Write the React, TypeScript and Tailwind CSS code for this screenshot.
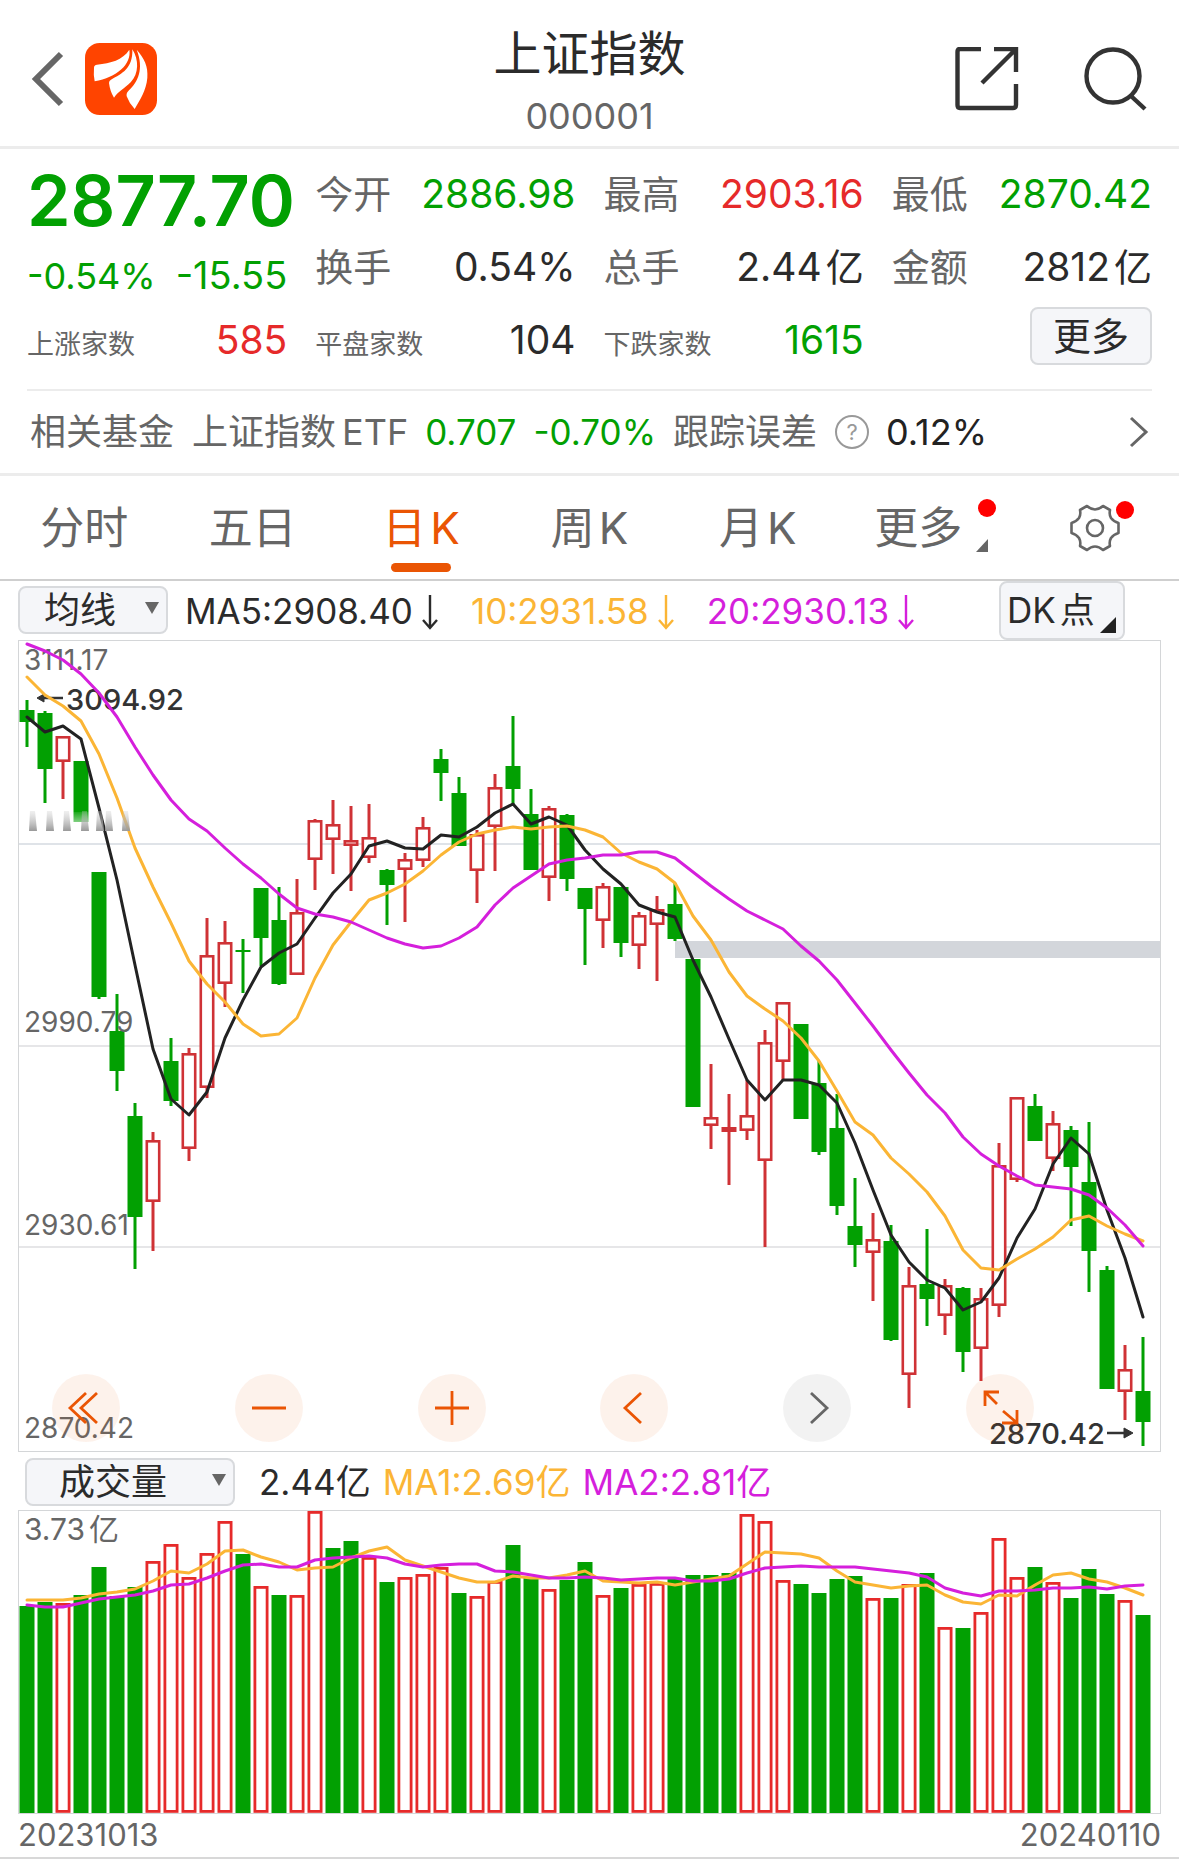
import type { ReactNode } from "react";

const GREEN = "#02a002";
const RED = "#cf3236";
const VOLUME_RED = "#e62a2a";
const BLACK = "#222222";
const AMBER = "#fbb535";
const MAGENTA = "#d51fdc";

const FIRST_X = 27;
const STEP = 18;
const BODY = 15;

type Candle = [kind: "g" | "r", high: number, top: number, bottom: number, low: number];

const candles: Candle[] = [
  ["g", 700, 710, 722, 747], ["g", 711, 713, 769, 803], ["r", 736, 736, 762, 799], ["g", 761, 761, 822, 822],
  ["g", 872, 872, 997, 999], ["g", 994, 1031, 1071, 1091], ["g", 1103, 1116, 1217, 1269], ["r", 1132, 1140, 1202, 1251],
  ["g", 1038, 1061, 1101, 1106], ["r", 1048, 1053, 1149, 1161], ["r", 918, 955, 1088, 1098], ["r", 921, 942, 984, 1007],
  ["g", 939, 950, 952, 993], ["g", 888, 888, 938, 966], ["g", 887, 920, 984, 985], ["r", 879, 912, 975, 975],
  ["r", 819, 820, 860, 890], ["r", 800, 824, 840, 874], ["r", 806, 840, 846, 891], ["r", 804, 837, 858, 863],
  ["g", 869, 870, 885, 925], ["r", 853, 859, 870, 922], ["r", 817, 827, 861, 867], ["g", 749, 759, 773, 801],
  ["g", 777, 793, 846, 846], ["r", 830, 834, 871, 903], ["r", 774, 787, 827, 871], ["g", 716, 766, 789, 805],
  ["g", 789, 814, 870, 870], ["r", 806, 808, 878, 901], ["g", 814, 815, 879, 891], ["g", 888, 888, 909, 965],
  ["r", 883, 886, 921, 948], ["g", 887, 887, 943, 957], ["r", 912, 915, 946, 969], ["r", 896, 909, 925, 981],
  ["g", 883, 904, 939, 941], ["g", 959, 959, 1107, 1107], ["r", 1064, 1117, 1126, 1149], ["r", 1094, 1127, 1132, 1185],
  ["r", 1080, 1115, 1131, 1140], ["r", 1030, 1042, 1161, 1247], ["r", 1002, 1002, 1062, 1080], ["g", 1024, 1024, 1119, 1119],
  ["g", 1061, 1083, 1152, 1155], ["g", 1094, 1128, 1206, 1215], ["g", 1178, 1226, 1245, 1267], ["r", 1213, 1239, 1253, 1301],
  ["g", 1225, 1241, 1340, 1341], ["r", 1267, 1285, 1375, 1408], ["g", 1229, 1284, 1299, 1326], ["r", 1279, 1285, 1316, 1335],
  ["g", 1287, 1288, 1352, 1372], ["r", 1288, 1298, 1349, 1381], ["r", 1143, 1165, 1306, 1317], ["r", 1097, 1097, 1180, 1182],
  ["g", 1094, 1106, 1141, 1141], ["r", 1111, 1123, 1159, 1171], ["g", 1126, 1130, 1167, 1226], ["g", 1122, 1182, 1251, 1292],
  ["g", 1266, 1270, 1389, 1389], ["r", 1345, 1369, 1392, 1420], ["g", 1337, 1391, 1422, 1446],
];

const ma5 = [717, 732, 726, 739, 808, 880, 965, 1049, 1099, 1115, 1092, 1038, 1000, 967, 953, 944, 918, 893, 874, 846, 841, 848, 849, 835, 837, 827, 813, 804, 824, 817, 825, 850, 869, 884, 905, 912, 917, 960, 997, 1039, 1080, 1100, 1080, 1080, 1085, 1103, 1143, 1190, 1235, 1262, 1280, 1288, 1310, 1302, 1278, 1238, 1209, 1164, 1138, 1154, 1210, 1258, 1317];
const ma10 = [677, 695, 706, 721, 754, 798, 848, 887, 923, 961, 984, 1002, 1024, 1036, 1034, 1018, 978, 945, 922, 900, 893, 884, 871, 855, 842, 834, 830, 827, 829, 827, 826, 830, 837, 853, 862, 869, 883, 916, 940, 972, 996, 1009, 1021, 1038, 1061, 1091, 1122, 1135, 1158, 1174, 1192, 1216, 1250, 1268, 1270, 1259, 1249, 1237, 1220, 1216, 1226, 1234, 1241];
const ma20 = [644, 651, 660, 674, 693, 717, 747, 775, 800, 819, 831, 848, 864, 878, 894, 908, 914, 917, 922, 930, 938, 944, 948, 946, 938, 927, 905, 888, 876, 864, 860, 858, 855, 855, 852, 852, 858, 872, 886, 899, 911, 920, 929, 946, 961, 980, 1003, 1026, 1050, 1073, 1095, 1113, 1137, 1154, 1166, 1176, 1185, 1187, 1189, 1195, 1208, 1225, 1246];

const volumeKinds = "ggrggggrrrrrgrgrrggrgrrrgrrggrggrgrrggggrrrggggrgrgrgrrrgrgggrg";
const volumes = [1606, 1602, 1603, 1595, 1567, 1596, 1587, 1561, 1544, 1577, 1553, 1521, 1554, 1586, 1595, 1595, 1511, 1548, 1541, 1557, 1582, 1577, 1574, 1567, 1593, 1596, 1581, 1545, 1578, 1589, 1580, 1562, 1595, 1588, 1584, 1583, 1579, 1575, 1575, 1573, 1514, 1521, 1580, 1584, 1593, 1579, 1576, 1598, 1598, 1584, 1573, 1627, 1628, 1612, 1538, 1577, 1567, 1582, 1598, 1569, 1594, 1600, 1615];
const volMa1 = [1600, 1600, 1600, 1598, 1594, 1592, 1589, 1581, 1571, 1573, 1564, 1551, 1550, 1557, 1562, 1570, 1568, 1567, 1558, 1551, 1547, 1560, 1566, 1572, 1578, 1582, 1582, 1576, 1578, 1578, 1575, 1571, 1581, 1582, 1583, 1582, 1585, 1582, 1579, 1576, 1564, 1552, 1553, 1554, 1558, 1571, 1582, 1585, 1588, 1586, 1585, 1595, 1602, 1604, 1595, 1596, 1585, 1575, 1573, 1579, 1582, 1588, 1595];
const volMa2 = [1605, 1607, 1607, 1603, 1599, 1597, 1595, 1591, 1585, 1584, 1578, 1571, 1565, 1564, 1567, 1567, 1560, 1558, 1557, 1556, 1558, 1564, 1567, 1565, 1564, 1564, 1571, 1572, 1575, 1578, 1578, 1577, 1578, 1580, 1579, 1578, 1578, 1581, 1581, 1579, 1573, 1568, 1567, 1566, 1567, 1567, 1567, 1569, 1571, 1573, 1577, 1588, 1593, 1596, 1591, 1591, 1590, 1588, 1588, 1587, 1589, 1586, 1585];

const xAt = (i: number) => FIRST_X + STEP * i;
const toPoints = (ys: number[]) => ys.map((y, i) => `${xAt(i)},${y}`).join(" ");

function Line({ ys, color }: { ys: number[]; color: string }) {
  return <polyline points={toPoints(ys)} fill="none" stroke={color} strokeWidth={3} strokeLinejoin="round" strokeLinecap="round" />;
}

function PriceChart() {
  return (
    <svg viewBox="18 640 1143 812" className="block h-auto w-full" role="img" aria-label="上证指数日K线图">
      <defs>
        <linearGradient id="smear" x1="0" y1="0" x2="0" y2="1">
          <stop offset="0" stopColor="#ccc" stopOpacity="0.3" />
          <stop offset="1" stopColor="#999" />
        </linearGradient>
        <linearGradient id="veil" x1="0" y1="0" x2="0" y2="1">
          <stop offset="0" stopColor="#fff" stopOpacity="0.1" />
          <stop offset="1" stopColor="#fff" stopOpacity="0.9" />
        </linearGradient>
      </defs>
      <rect x="18.5" y="640.5" width="1142" height="811" fill="#fff" stroke="#d4d6d8" />
      <g strokeWidth="2">
        <path d="M19 844H1160" stroke="#dfe3e8" />
        <path d="M19 1046H1160M19 1247H1160" stroke="#e6e6e8" />
      </g>
      <rect x="675" y="941" width="485" height="17" fill="#d3d6db" />
      {candles.map(([kind, high, top, bottom, low], i) => {
        const x = xAt(i);
        return kind === "g" ? (
          <g key={i} fill={GREEN}>
            <rect x={x - 1.5} y={high} width={3} height={low - high} />
            <rect x={x - BODY / 2} y={top} width={BODY} height={bottom - top} />
          </g>
        ) : (
          <g key={i} stroke={RED}>
            <path d={`M${x} ${high}V${low}`} strokeWidth={3} />
            <rect x={x - 6.2} y={top + 1.3} width={12.4} height={bottom - top - 2.6} fill="#fff" strokeWidth={2.6} />
          </g>
        );
      })}
      <rect x="71" y="812" width="20" height="20" fill="url(#veil)" />
      <g fontSize="28" fill="#666">
        <text x="24" y="670">3111.17</text>
        <text x="24" y="1032">2990.79</text>
        <text x="24" y="1235">2930.61</text>
        <text x="24" y="1438">2870.42</text>
      </g>
      <g fontSize="29" fontWeight="500" fill="#333">
        <text x="66" y="710">3094.92</text>
        <text x="989" y="1444">2870.42</text>
      </g>
      <g stroke="#333" strokeWidth="2.5" fill="#333">
        <path d="M42 698H63" />
        <path d="M37 698L44 694V702Z" strokeWidth="1" />
        <path d="M1107 1433H1126" />
        <path d="M1133 1433L1124 1428V1438Z" strokeWidth="1" />
      </g>
      <Line ys={ma5} color={BLACK} />
      <Line ys={ma10} color={AMBER} />
      <Line ys={ma20} color={MAGENTA} />
      <g fill="url(#smear)">
        {[29, 46, 63, 81, 96, 105, 122].map((x) => (
          <path key={x} d={`M${x + 1} 811H${x + 6}L${x + 8} 831H${x}Z`} />
        ))}
      </g>
    </svg>
  );
}

function VolumeChart() {
  return (
    <svg viewBox="18 1510 1143 304" className="block h-auto w-full" role="img" aria-label="成交量柱状图">
      <rect x="18.5" y="1510.5" width="1142" height="303" fill="#fff" stroke="#d4d6d8" />
      {volumes.map((top, i) => {
        const x = xAt(i);
        return volumeKinds[i] === "g" ? (
          <rect key={i} x={x - BODY / 2} y={top} width={BODY} height={1813 - top} fill={GREEN} />
        ) : (
          <rect key={i} x={x - 6.1} y={top + 1.4} width={12.2} height={1810 - top} fill="#fff" stroke={VOLUME_RED} strokeWidth={2.8} />
        );
      })}
      <text x="24" y="1540" fontSize="30" fill="#666">3.73<tspan dx="4">亿</tspan></text>
      <Line ys={volMa1} color={AMBER} />
      <Line ys={volMa2} color={MAGENTA} />
    </svg>
  );
}

function Stat({ label, value, unit, tone, small }: { label: string; value: string; unit?: string; tone: string; small?: boolean }) {
  return (
    <div className="flex h-[73px] items-baseline justify-between whitespace-nowrap">
      <dt className={small ? "text-[27px] text-[#666]" : "text-[38px] text-[#666]"}>{label}</dt>
      <dd className={`text-[39px] leading-[56px] ${tone}`}>
        {value}
        {unit && <span className="ml-1 text-[38px]">{unit}</span>}
      </dd>
    </div>
  );
}

const green = "text-[#02a002]";
const red = "text-[#e62a2a]";
const dark = "text-[#2b2b2b]";

function Picker({ label, option, size }: { label: string; option: string; size: string }) {
  return (
    <div className="relative shrink-0">
      <select aria-label={label} className={`h-12 appearance-none rounded-lg border-2 border-[#d8dadd] bg-[#f5f6f9] text-[36px] leading-none text-[#2b2b2b] ${size}`}>
        <option>{option}</option>
      </select>
      <svg viewBox="0 0 14 12" className="pointer-events-none absolute top-[18px] right-[9px] w-[14px]" aria-hidden="true">
        <path d="M0 0H14L7 12Z" fill="#666" />
      </svg>
    </div>
  );
}

function DownArrow() {
  return (
    <svg viewBox="0 0 18 36" className="h-9 w-[18px]" fill="none" stroke="currentColor" strokeWidth="2.4" aria-label="下降">
      <path d="M9 1V34M2 26L9 34L16 26" />
    </svg>
  );
}

function Average({ text, tone }: { text: string; tone: string }) {
  return (
    <span className={`flex items-center gap-2 whitespace-nowrap ${tone}`}>
      {text}
      <DownArrow />
    </span>
  );
}

function Tab({ children, active }: { children: ReactNode; active?: boolean }) {
  return (
    <button
      type="button"
      role="tab"
      aria-selected={!!active}
      className={`relative flex h-full flex-1 items-center justify-center gap-1 text-[44px] whitespace-nowrap ${active ? "text-[#ea5504]" : "text-[#666]"}`}
    >
      {children}
      {active && <span className="absolute bottom-[7px] left-1/2 h-[9px] w-[60px] -translate-x-1/2 rounded-full bg-[#ea5504]" />}
    </button>
  );
}

function RoundButton({ label, children, muted }: { label: string; children: ReactNode; muted?: boolean }) {
  return (
    <button
      type="button"
      aria-label={label}
      className={`flex size-[68px] items-center justify-center rounded-full ${muted ? "bg-black/5 text-[#666]" : "bg-[#ea5504]/8 text-[#ea5504]"}`}
    >
      <svg viewBox="0 0 68 68" className="size-full" fill="none" stroke="currentColor" strokeWidth="2.8">
        {children}
      </svg>
    </button>
  );
}

export default function App() {
  return (
    <main className="min-h-screen bg-white font-['Inter','Noto_Sans_CJK_SC',sans-serif] text-[#2b2b2b]">
      <header className="flex h-[149px] items-center justify-between border-b-3 border-[#ececec] px-[31px]">
        <div className="flex flex-1 items-center gap-[21px] pt-3">
          <button type="button" aria-label="返回">
            <svg viewBox="0 0 33 56" className="h-14 w-[33px]" fill="none" stroke="#666" strokeWidth="6">
              <path d="M30 3L5 28L30 53" />
            </svg>
          </button>
          <svg viewBox="0 0 216 216" className="size-[72px]" role="img" aria-label="东方财富">
            <rect width="216" height="216" rx="44" fill="#ff4400" />
            <g fill="#fff">
              <path d="M27 74Q27 66 36 65C78 60 112 52 133 20C140 64 95 103 29 115Q25 95 27 74Z" />
              <path d="M142 19C144 76 112 92 78 110Q72 113 72 120Q75 145 87 164C97 148 118 137 137 118C162 92 162 50 142 19Z" />
              <path d="M155 20C178 46 190 70 187 104C184 142 164 172 149 198Q132 180 125 160Q123 150 132 142C158 117 178 78 155 20Z" />
            </g>
          </svg>
        </div>
        <div className="pt-[22px] text-center">
          <h1 className="text-[48px] leading-[64px]">上证指数</h1>
          <p className="text-[36px] leading-[60px] text-[#666]">000001</p>
        </div>
        <div className="flex flex-1 items-center justify-end gap-[65px] pt-3">
          <button type="button" aria-label="分享">
            <svg viewBox="0 0 64 64" className="size-16" fill="none" stroke="#333" strokeWidth="4.4">
              <path d="M26 2H5Q2.500 2 2.500 5V58Q2.500 61 5 61H58Q61 61 61 58V37" />
              <path d="M39 2H61V25M61 2L27 36" />
            </svg>
          </button>
          <button type="button" aria-label="搜索">
            <svg viewBox="0 0 64 64" className="size-16" fill="none" stroke="#333" strokeWidth="4.400">
              <circle cx="29" cy="29" r="26.500" />
              <path d="M47 49L61 62" />
            </svg>
          </button>
        </div>
      </header>

      <section className="mx-[27px] grid h-[242px] grid-cols-4 gap-x-7 border-b-2 border-[#ececec]">
        <div className="pt-2">
          <p className={`h-[82px] text-[70px] leading-[88px] font-semibold ${green}`}>2877.70</p>
          <p className={`flex h-[73px] items-center justify-between whitespace-nowrap ${green}`}>
            <span className="text-[36px]">-0.54%</span>
            <span className="text-[38px]">-15.55</span>
          </p>
          <dl>
            <Stat label="上涨家数" value="585" tone={red} small />
          </dl>
        </div>
        <dl className="pt-[17px]">
          <Stat label="今开" value="2886.98" tone={green} />
          <Stat label="换手" value="0.54%" tone={dark} />
          <Stat label="平盘家数" value="104" tone={dark} small />
        </dl>
        <dl className="pt-[17px]">
          <Stat label="最高" value="2903.16" tone={red} />
          <Stat label="总手" value="2.44" unit="亿" tone={dark} />
          <Stat label="下跌家数" value="1615" tone={green} small />
        </dl>
        <div className="flex flex-col pt-[17px]">
          <dl>
            <Stat label="最低" value="2870.42" tone={green} />
            <Stat label="金额" value="2812" unit="亿" tone={dark} />
          </dl>
          <button type="button" className="-mt-[5px] h-[58px] w-[122px] self-end rounded-lg border-2 border-[#d8dadd] bg-[#f5f6f9] text-[38px] leading-none">
            更多
          </button>
        </div>
      </section>

      <a href="#fund" className="flex h-[85px] items-center border-b-3 border-[#ececec] px-[30px] text-[36px] whitespace-nowrap text-[#666]">
        <span>相关基金</span>
        <span className="ml-[18px]">
          上证指数<span className="ml-[6px]">ETF</span>
        </span>
        <span className={`ml-[17px] text-[35px] ${green}`}>0.707</span>
        <span className={`ml-[17px] text-[35px] ${green}`}>-0.70%</span>
        <span className="ml-[17px]">跟踪误差</span>
        <span className="ml-[18px] flex size-[34px] items-center justify-center rounded-full border-2 border-[#999] text-[22px] text-[#999]">?</span>
        <span className="ml-[17px] text-[36px] text-[#222]">0.12%</span>
        <svg viewBox="0 0 20 32" className="ml-auto h-8 w-5" fill="none" stroke="#666" strokeWidth="3" aria-hidden="true">
          <path d="M2 2L17 16L2 30" />
        </svg>
      </a>

      <nav role="tablist" aria-label="周期" className="flex h-[105px] items-center border-b-2 border-[#cfcfcf]">
        <Tab>分时</Tab>
        <Tab>五日</Tab>
        <Tab active>
          <span>日</span>
          <span>K</span>
        </Tab>
        <Tab>
          <span>周</span>
          <span>K</span>
        </Tab>
        <Tab>
          <span>月</span>
          <span>K</span>
        </Tab>
        <Tab>
          <span className="relative mr-4">
            更多
            <span className="absolute top-1 -right-[34px] size-[18px] rounded-full bg-[#ff0000]" />
            <svg viewBox="0 0 12 13" className="absolute -right-[26px] bottom-[9px] w-3" aria-hidden="true">
              <path d="M12 0V13H0Z" fill="#666" />
            </svg>
          </span>
        </Tab>
        <button type="button" aria-label="设置" className="flex h-full flex-1 items-center justify-center">
          <span className="relative">
            <svg viewBox="0 0 50 50" className="size-[50px]" fill="none" stroke="#666" strokeWidth="2.6" strokeLinejoin="round">
              <path d="M17 3Q21 6.500 25 6.500Q29 6.500 33 3L40 7Q39 12 41 15Q43.500 18.500 48.500 20V30Q43.500 31.500 41 35Q39 38.500 40 43L33 47Q29 43.500 25 43.500Q21 43.500 17 47L10 43Q11 38.500 9 35Q6.500 31.500 1.500 30V20Q6.500 18.500 9 15Q11 12 10 7Z" />
              <circle cx="25" cy="25" r="8" />
            </svg>
            <span className="absolute -top-[2px] -right-[14px] size-[18px] rounded-full bg-[#ff0000]" />
          </span>
        </button>
      </nav>

      <section className="px-[18px]">
        <div className="flex h-[59px] items-center text-[35px]">
          <Picker label="主图指标" option="均线" size="w-[150px] pl-6" />
          <div className="ml-[17px] flex items-center gap-8 pt-[2px]">
            <Average text="MA5:2908.40" tone="text-[#2b2b2b]" />
            <Average text="10:2931.58" tone="text-[#fbb535]" />
            <Average text="20:2930.13" tone="text-[#d51fdc]" />
          </div>
          <button type="button" className="relative mr-9 ml-auto flex h-[59px] w-[126px] items-center gap-1 rounded-lg border-2 border-[#d8dadd] bg-[#f5f6f9] pl-[6px] whitespace-nowrap">
            <span>DK</span>
            <span>点</span>
            <svg viewBox="0 0 16 16" className="absolute right-[7px] bottom-[5px] w-4" aria-hidden="true">
              <path d="M16 0V16H0Z" fill="#222" />
            </svg>
          </button>
        </div>

        <div className="relative">
          <PriceChart />
          <div className="absolute right-[127px] bottom-[10px] left-[34px] flex justify-between">
            <RoundButton label="最早">
              <path d="M34 19L18 34L34 49M45 19L29 34L45 49" />
            </RoundButton>
            <RoundButton label="缩小">
              <path d="M17 34H51" />
            </RoundButton>
            <RoundButton label="放大">
              <path d="M17 34H51M34 17V51" />
            </RoundButton>
            <RoundButton label="左移">
              <path d="M41 19L25 34L41 49" />
            </RoundButton>
            <RoundButton label="右移" muted>
              <path d="M28 19L44 34L28 49" />
            </RoundButton>
            <RoundButton label="全屏">
              <path d="M19 32V18H33M19 18L31 30M51 36V49H36M50 48L37 37" />
            </RoundButton>
          </div>
        </div>

        <div className="flex h-[58px] items-center gap-3 pt-[2px] pl-[7px] text-[35px] whitespace-nowrap">
          <Picker label="副图指标" option="成交量" size="w-[210px] pl-8" />
          <span className="ml-3">2.44亿</span>
          <span className="text-[#fbb535]">MA1:2.69亿</span>
          <span className="text-[#d51fdc]">MA2:2.81亿</span>
        </div>

        <VolumeChart />
        <div className="flex h-[43px] items-center justify-between text-[31px] text-[#666]">
          <time dateTime="2023-10-13">20231013</time>
          <time dateTime="2024-01-10">20240110</time>
        </div>
      </section>
      <hr className="border-t-2 border-[#d8d8d8]" />
    </main>
  );
}
